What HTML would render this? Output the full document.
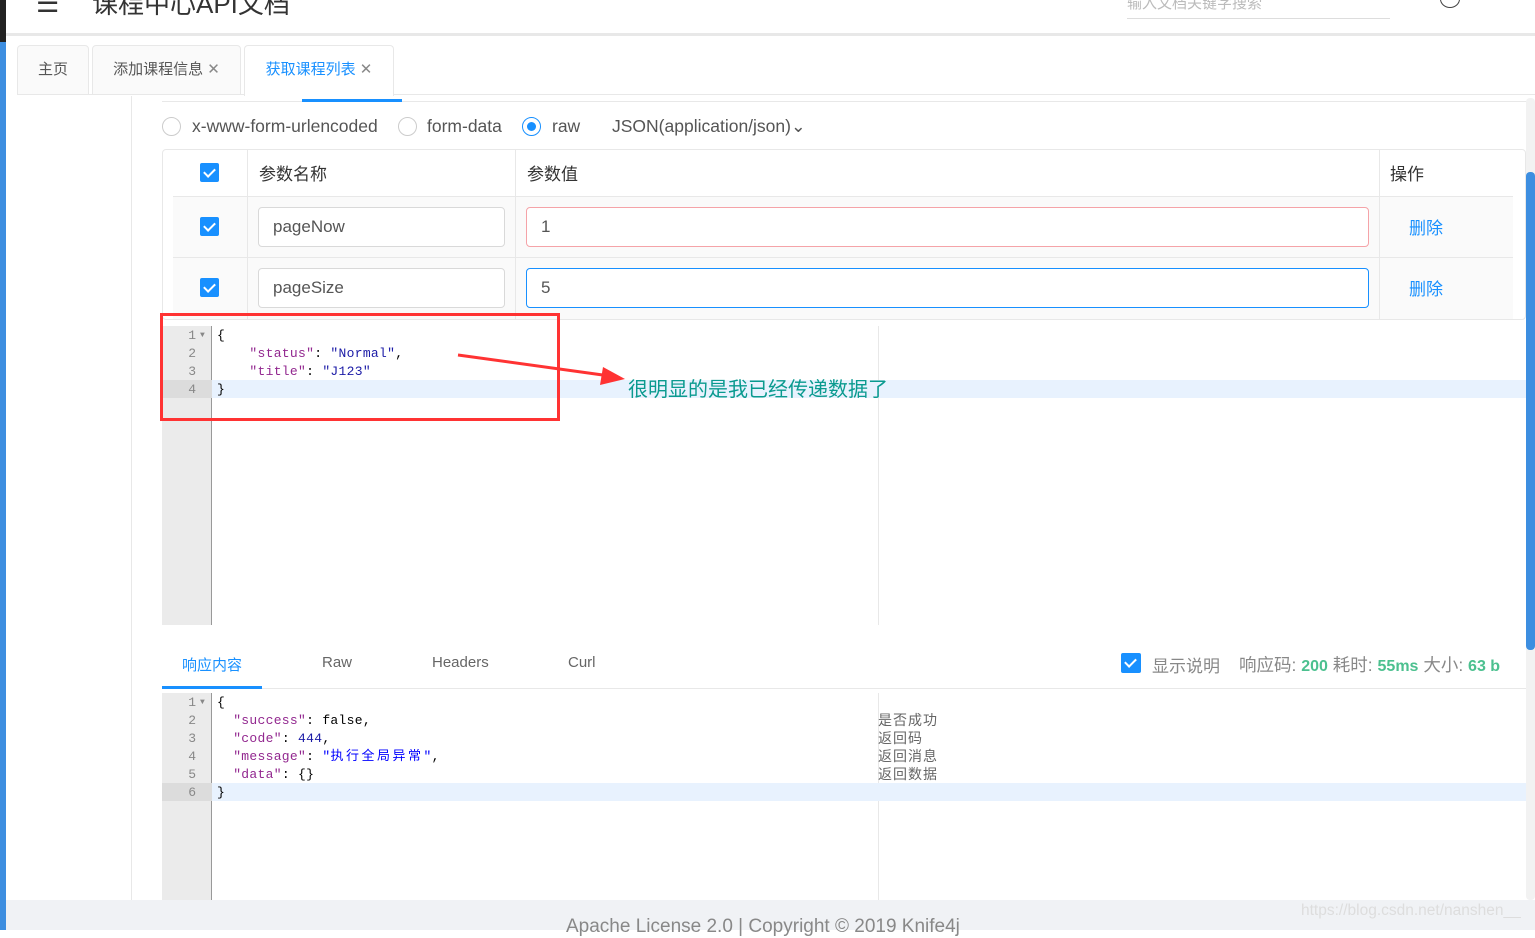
<!DOCTYPE html>
<html><head><meta charset="utf-8"><style>
*{box-sizing:border-box;margin:0;padding:0}
body{width:1535px;height:930px;overflow:hidden;background:#fff;font-family:"Liberation Sans","Noto Sans CJK SC",sans-serif;position:relative;color:#333}
.a{position:absolute}
.mono{font-family:"Liberation Mono","Noto Sans CJK SC",monospace;font-size:13px}
.cb{position:absolute;width:19px;height:19px;background:#1890ff;border-radius:2px}
.cb:after{content:"";position:absolute;left:6px;top:3px;width:5px;height:9px;border:solid #fff;border-width:0 2px 2px 0;transform:rotate(45deg)}
.inp{position:absolute;height:40px;border:1px solid #d9d9d9;border-radius:4px;font-size:17px;color:#555;padding:9px 14px;background:#fff}
.k{color:#92278f}.s{color:#1a1aa6}.n{color:#1a1aa6}
</style></head><body>
<div class="a" style="left:0;top:0;width:1535px;height:36px;background:#fff;border-bottom:3px solid #e8e8e8"></div>
<div class="a" style="left:0;top:0;width:6px;height:42px;background:#222"></div>
<div class="a" style="left:0;top:42px;width:6px;height:888px;background:#3d8ee0"></div>
<div class="a" style="left:36px;top:-12px;font-size:26px;color:#333">☰</div>
<div class="a" style="left:92px;top:-16px;font-size:26px;color:#333">课程中心API文档</div>
<div class="a" style="left:1127px;top:-8px;font-size:15px;color:#bbb">输入文档关键字搜索</div>
<div class="a" style="left:1127px;top:18px;width:263px;height:1px;background:#ddd"></div>
<div class="a" style="left:1440px;top:-10px;width:20px;height:18px;border:1.5px solid #444;border-radius:50%"></div>
<div class="a" style="left:6px;top:36px;width:1529px;height:894px;background:#fff"></div>
<div class="a" style="left:17px;top:45px;width:72px;height:50px;background:#fafafa;border:1px solid #e8e8e8;border-radius:4px 4px 0 0;font-size:15px;color:#555;text-align:center;line-height:48px">主页</div>
<div class="a" style="left:92px;top:45px;width:149px;height:50px;background:#fafafa;border:1px solid #e8e8e8;border-radius:4px 4px 0 0;font-size:15px;color:#555;text-align:center;line-height:48px">添加课程信息 <span style="color:#888">✕</span></div>
<div class="a" style="left:244px;top:45px;width:150px;height:51px;background:#fff;border:1px solid #e8e8e8;border-bottom:none;border-radius:4px 4px 0 0;font-size:15px;color:#1890ff;text-align:center;line-height:48px">获取课程列表 <span style="color:#888">✕</span></div>
<div class="a" style="left:394px;top:94px;width:1141px;height:1px;background:#e8e8e8"></div>
<div class="a" style="left:17px;top:94px;width:227px;height:1px;background:#e8e8e8"></div>
<div class="a" style="left:131px;top:96px;width:1px;height:804px;background:#e8e8e8"></div>
<div class="a" style="left:162px;top:101px;width:1365px;height:1px;background:#e8e8e8"></div>
<div class="a" style="left:302px;top:99px;width:100px;height:3px;background:#1890ff"></div>
<div class="a" style="left:162px;top:117px;width:19px;height:19px;border:1px solid #ccc;border-radius:50%"></div>
<div class="a" style="left:192px;top:116px;font-size:17.5px;color:#555">x-www-form-urlencoded</div>
<div class="a" style="left:398px;top:117px;width:19px;height:19px;border:1px solid #ccc;border-radius:50%"></div>
<div class="a" style="left:427px;top:116px;font-size:17.5px;color:#555">form-data</div>
<div class="a" style="left:522px;top:117px;width:19px;height:19px;border:1px solid #1890ff;border-radius:50%"><div style="margin:4px;width:9px;height:9px;border-radius:50%;background:#1890ff"></div></div>
<div class="a" style="left:552px;top:116px;font-size:17.5px;color:#555">raw</div>
<div class="a" style="left:612px;top:116px;font-size:17.5px;color:#555">JSON(application/json)⌄</div>
<div class="a" style="left:162px;top:149px;width:1364px;height:171px;border:1px solid #e8e8e8;border-radius:4px"></div>
<div class="a" style="left:173px;top:196px;width:1340px;height:123px;background:#fafafa"></div>
<div class="a" style="left:173px;top:196px;width:1340px;height:1px;background:#e8e8e8"></div>
<div class="a" style="left:173px;top:257px;width:1340px;height:1px;background:#e8e8e8"></div>
<div class="a" style="left:247px;top:150px;width:1px;height:169px;background:#e8e8e8"></div>
<div class="a" style="left:515px;top:150px;width:1px;height:169px;background:#e8e8e8"></div>
<div class="a" style="left:1379px;top:150px;width:1px;height:169px;background:#e8e8e8"></div>
<div class="cb" style="left:200px;top:163px"></div>
<div class="a" style="left:259px;top:160px;font-size:17px;color:#333">参数名称</div>
<div class="a" style="left:527px;top:160px;font-size:17px;color:#333">参数值</div>
<div class="a" style="left:1390px;top:160px;font-size:17px;color:#333">操作</div>
<div class="cb" style="left:200px;top:217px"></div>
<div class="inp" style="left:258px;top:207px;width:247px">pageNow</div>
<div class="inp" style="left:526px;top:207px;width:843px;border-color:#f5a3a8">1</div>
<div class="a" style="left:1409px;top:214px;font-size:17px;color:#1890ff">删除</div>
<div class="cb" style="left:200px;top:278px"></div>
<div class="inp" style="left:258px;top:268px;width:247px">pageSize</div>
<div class="inp" style="left:526px;top:268px;width:843px;border-color:#1890ff">5</div>
<div class="a" style="left:1409px;top:275px;font-size:17px;color:#1890ff">删除</div>
<div class="a" style="left:162px;top:326px;width:50px;height:299px;background:#ebebeb;border-right:1px solid #999"></div>
<div class="a" style="left:878px;top:326px;width:1px;height:299px;background:#e8e8e8"></div>
<div class="a" style="left:212px;top:380px;width:1315px;height:18px;background:#e8f2fe"></div>
<div class="a" style="left:162px;top:380px;width:50px;height:18px;background:#dcdcdc"></div>
<div class="a mono" style="left:162px;top:327px;width:34px;text-align:right;line-height:18px;color:#888">1<br>2<br>3<br>4</div>
<div class="a mono" style="left:200px;top:327px;font-size:8px;line-height:18px;color:#888">▼</div>
<div class="a mono" style="left:217px;top:327px;line-height:18px;white-space:pre;color:#000;letter-spacing:0.3px">{
    <span class="k">"status"</span>: <span class="s">"Normal"</span>,
    <span class="k">"title"</span>: <span class="s">"J123"</span>
}</div>
<div class="a" style="left:160px;top:313px;width:400px;height:108px;border:3px solid #f33"></div>
<svg class="a" style="left:455px;top:350px" width="175" height="40"><line x1="3" y1="5" x2="155" y2="26" stroke="#f33" stroke-width="3"/><polygon points="170,29 148,17 145,35" fill="#f33"/></svg>
<div class="a" style="left:628px;top:373px;font-size:20px;color:#0a9a8f">很明显的是我已经传递数据了</div>
<div class="a" style="left:182px;top:654px;font-size:15px;color:#1890ff">响应内容</div>
<div class="a" style="left:322px;top:654px;font-size:15px;color:#666">Raw</div>
<div class="a" style="left:432px;top:654px;font-size:15px;color:#666">Headers</div>
<div class="a" style="left:568px;top:654px;font-size:15px;color:#666">Curl</div>
<div class="a" style="left:162px;top:688px;width:1365px;height:1px;background:#e8e8e8"></div>
<div class="a" style="left:162px;top:686px;width:100px;height:3px;background:#1890ff"></div>
<div class="cb" style="left:1121px;top:653px;width:20px;height:20px"></div>
<div class="a" style="left:1152px;top:652px;font-size:17px;color:#888">显示说明</div>
<div class="a" style="left:1239px;top:652px;font-size:17.5px;color:#888;white-space:nowrap">响应码: <b style="color:#4cc08f;font-size:16px">200</b> 耗时: <b style="color:#4cc08f;font-size:16px">55ms</b> 大小: <b style="color:#4cc08f;font-size:16px">63 b</b></div>
<div class="a" style="left:162px;top:693px;width:50px;height:207px;background:#ebebeb;border-right:1px solid #999"></div>
<div class="a" style="left:878px;top:693px;width:1px;height:207px;background:#e8e8e8"></div>
<div class="a" style="left:212px;top:783px;width:1315px;height:18px;background:#e8f2fe"></div>
<div class="a" style="left:162px;top:783px;width:50px;height:18px;background:#dcdcdc"></div>
<div class="a mono" style="left:162px;top:694px;width:34px;text-align:right;line-height:18px;color:#888">1<br>2<br>3<br>4<br>5<br>6</div>
<div class="a mono" style="left:200px;top:694px;font-size:8px;line-height:18px;color:#888">▼</div>
<div class="a mono" style="left:217px;top:694px;line-height:18px;white-space:pre;color:#000;letter-spacing:0.3px">{
  <span class="k">"success"</span>: false,
  <span class="k">"code"</span>: <span class="n">444</span>,
  <span class="k">"message"</span>: <span style="color:#00f">"<span style="letter-spacing:2.5px">执行全局异常</span>"</span>,
  <span class="k">"data"</span>: {}
}</div>
<div class="a" style="left:878px;top:711px;font-size:14px;line-height:18px;color:#666;letter-spacing:1px">是否成功<br>返回码<br>返回消息<br>返回数据</div>
<div class="a" style="left:1526px;top:98px;width:9px;height:802px;background:#f2f2f2;border-radius:4px"></div>
<div class="a" style="left:1526px;top:172px;width:9px;height:478px;background:#3d8ee0;border-radius:4px"></div>
<div class="a" style="left:6px;top:900px;width:1529px;height:30px;background:#f0f2f5"></div>
<div class="a" style="left:566px;top:916px;font-size:19px;color:#888">Apache License 2.0 | Copyright © 2019 Knife4j</div>
<div class="a" style="left:1301px;top:902px;font-size:15.5px;color:#ddd">https://blog.csdn.net/nanshen__</div>
</body></html>
